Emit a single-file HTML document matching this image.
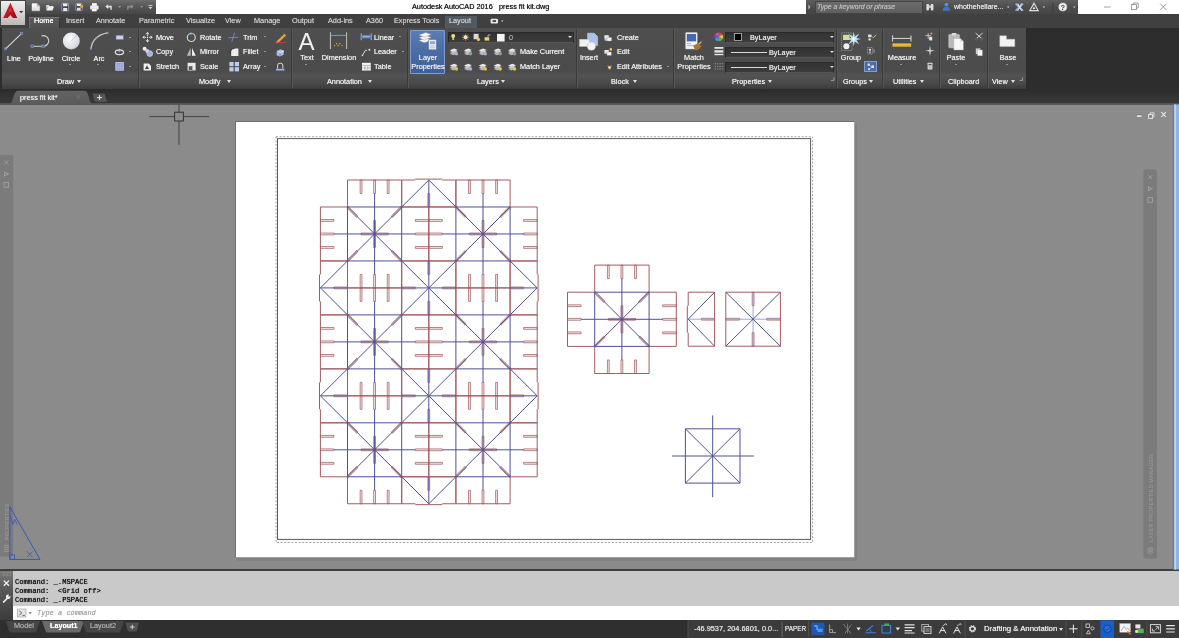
<!DOCTYPE html>
<html><head><meta charset="utf-8"><title>Autodesk AutoCAD 2016 press fit kit.dwg</title>
<style>
*{box-sizing:border-box;margin:0;padding:0}
html,body{width:1179px;height:638px;overflow:hidden;background:#8b8b8b;font-family:"Liberation Sans",sans-serif;font-size:7.3px;color:#ececec}
.a{position:absolute}
.t{position:absolute;white-space:nowrap;line-height:10px;height:10px;text-shadow:0 0 0.7px currentColor;will-change:transform}
svg{position:absolute;left:0;top:0;overflow:visible}
#title{left:0;top:0;width:1179px;height:14px;background:#fff}
#appbtn{z-index:10;left:0;top:0;width:25.5px;height:25.5px;background:linear-gradient(#eeeeee,#d4d4d4 55%,#b8b8b8);border:1px solid #444;border-width:0.8px 1.2px 1.4px 0.8px}
#qat{left:25px;top:0;width:131px;height:14.5px;background:linear-gradient(#6c6c6c,#565656 45%,#454545)}
#info{left:806px;top:0;width:272px;height:14.5px;background:linear-gradient(#5e5e5e,#4c4c4c 50%,#444)}
#tabs{left:0;top:14px;width:1179px;height:14px;background:#404040}
#ribbon{left:0;top:27.5px;width:1179px;height:62px;background:#2d2d2d}
#rpanels{left:1.5px;top:0;width:1024px;height:61px;background:linear-gradient(#4f4f4f,#4b4b4b 70%,#535353 78%,#4a4a4a 90%,#3c3c3c)}
.sep{position:absolute;top:1px;width:1px;height:59px;background:#3a3a3a;border-right:1px solid #575757;box-sizing:content-box}
#ftabs{left:0;top:88.5px;width:1179px;height:16.2px;background:linear-gradient(#2b2b2b,#353535 60%,#3a3a3a)}
#canvas{left:0;top:104.7px;width:1179px;height:465.3px;background:#8b8b8b}
#cmd{left:0;top:569px;width:1179px;height:51px}
#status{left:0;top:619.5px;width:1179px;height:18.5px;background:#2f2f2f}
.mono{font-family:"Liberation Mono",monospace}
</style></head><body>
<div class="a" id="title"><div class="a" id="qat"></div><div class="t" style="left:412px;top:2px;color:#1e1e1e;font-size:7.3px;">Autodesk AutoCAD 2016</div><div class="t" style="left:499px;top:2px;color:#1e1e1e;font-size:7.3px;">press fit kit.dwg</div><div class="a" id="info"></div><div class="a" style="left:814.5px;top:0.5px;width:108.5px;height:13px;background:linear-gradient(#6c6c6c,#5e5e5e);border:0.6px solid #444"></div><div class="t" style="left:817px;top:2.2px;color:#b9b9b9;font-size:6.8px;font-style:italic;">Type a keyword or phrase</div><div class="t" style="left:954px;top:2.2px;color:#e4e4e4;font-size:7px;">whothehellare...</div></div><div class="a" id="appbtn"></div>
<div class="a" id="tabs"><div class="a" style="left:28.5px;top:2.5px;width:31px;height:12px;background:linear-gradient(#5a5a5a,#505050);border-top:1px solid #777;border-left:1px solid #6a6a6a;border-right:1px solid #333"></div><div class="a" style="left:444.5px;top:1.5px;width:32px;height:12.5px;background:#525860;"></div><div class="t" style="left:34.2px;top:2.3px;color:#fff;">Home</div><div class="t" style="left:66.2px;top:2.3px;color:#c6c6c6;">Insert</div><div class="t" style="left:96.4px;top:2.3px;color:#c6c6c6;">Annotate</div><div class="t" style="left:138.5px;top:2.3px;color:#c6c6c6;">Parametric</div><div class="t" style="left:185.7px;top:2.3px;color:#c6c6c6;">Visualize</div><div class="t" style="left:225.4px;top:2.3px;color:#c6c6c6;">View</div><div class="t" style="left:253.5px;top:2.3px;color:#c6c6c6;">Manage</div><div class="t" style="left:291.5px;top:2.3px;color:#c6c6c6;">Output</div><div class="t" style="left:327.5px;top:2.3px;color:#c6c6c6;">Add-ins</div><div class="t" style="left:365.5px;top:2.3px;color:#c6c6c6;">A360</div><div class="t" style="left:393.5px;top:2.3px;color:#c6c6c6;">Express Tools</div><div class="t" style="left:449px;top:2.3px;color:#c6c6c6;">Layout</div></div>
<div class="a" id="ribbon"><div class="a" id="rpanels"></div><div class="sep" style="left:137.5px"></div><div class="sep" style="left:291px"></div><div class="sep" style="left:406.5px"></div><div class="sep" style="left:575.5px"></div><div class="sep" style="left:673px"></div><div class="sep" style="left:835.5px"></div><div class="sep" style="left:881.5px"></div><div class="sep" style="left:939px"></div><div class="sep" style="left:987px"></div><div class="t" style="left:14.2px;top:26.1px;transform:translateX(-50%);">Line</div><div class="t" style="left:40.6px;top:26.1px;transform:translateX(-50%);">Polyline</div><div class="t" style="left:71.2px;top:26.1px;transform:translateX(-50%);">Circle</div><div class="t" style="left:99.2px;top:26.1px;transform:translateX(-50%);">Arc</div><div class="a" style="left:69.4px;top:36.56px;width:0;height:0;border-left:1.4px solid transparent;border-right:1.4px solid transparent;border-top:1.96px solid #e0e0e0"></div><div class="a" style="left:97.3px;top:36.56px;width:0;height:0;border-left:1.4px solid transparent;border-right:1.4px solid transparent;border-top:1.96px solid #e0e0e0"></div><div class="a" style="left:128.6px;top:9.06px;width:0;height:0;border-left:1.4px solid transparent;border-right:1.4px solid transparent;border-top:1.96px solid #e0e0e0"></div><div class="a" style="left:128.6px;top:23.66px;width:0;height:0;border-left:1.4px solid transparent;border-right:1.4px solid transparent;border-top:1.96px solid #e0e0e0"></div><div class="a" style="left:128.6px;top:38.06px;width:0;height:0;border-left:1.4px solid transparent;border-right:1.4px solid transparent;border-top:1.96px solid #e0e0e0"></div><div class="t" style="left:57.2px;top:49.3px;">Draw</div><div class="a" style="left:77.3px;top:52.62px;width:0;height:0;border-left:2.3px solid transparent;border-right:2.3px solid transparent;border-top:3.22px solid #e0e0e0"></div><div class="t" style="left:155.8px;top:5.3px;">Move</div><div class="t" style="left:155.8px;top:19.9px;">Copy</div><div class="t" style="left:155.8px;top:34.6px;">Stretch</div><div class="t" style="left:200px;top:5.3px;">Rotate</div><div class="t" style="left:200px;top:19.9px;">Mirror</div><div class="t" style="left:200px;top:34.6px;">Scale</div><div class="t" style="left:242.5px;top:5.3px;">Trim</div><div class="t" style="left:242.5px;top:19.9px;">Fillet</div><div class="t" style="left:242.5px;top:34.6px;">Array</div><div class="a" style="left:264.1px;top:8.96px;width:0;height:0;border-left:1.4px solid transparent;border-right:1.4px solid transparent;border-top:1.96px solid #e0e0e0"></div><div class="a" style="left:264.1px;top:23.56px;width:0;height:0;border-left:1.4px solid transparent;border-right:1.4px solid transparent;border-top:1.96px solid #e0e0e0"></div><div class="a" style="left:264.1px;top:38.26px;width:0;height:0;border-left:1.4px solid transparent;border-right:1.4px solid transparent;border-top:1.96px solid #e0e0e0"></div><div class="t" style="left:199.2px;top:49.3px;">Modify</div><div class="a" style="left:226.6px;top:52.62px;width:0;height:0;border-left:2.3px solid transparent;border-right:2.3px solid transparent;border-top:3.22px solid #e0e0e0"></div><div class="t" style="left:306.5px;top:25.7px;transform:translateX(-50%);">Text</div><div class="a" style="left:305.0px;top:36.16px;width:0;height:0;border-left:1.4px solid transparent;border-right:1.4px solid transparent;border-top:1.96px solid #e0e0e0"></div><div class="t" style="left:339px;top:25.7px;transform:translateX(-50%);">Dimension</div><div class="t" style="left:374.2px;top:5.2px;">Linear</div><div class="t" style="left:374.2px;top:19.9px;">Leader</div><div class="t" style="left:374.2px;top:34.8px;">Table</div><div class="a" style="left:399.1px;top:8.46px;width:0;height:0;border-left:1.4px solid transparent;border-right:1.4px solid transparent;border-top:1.96px solid #e0e0e0"></div><div class="a" style="left:401.6px;top:23.56px;width:0;height:0;border-left:1.4px solid transparent;border-right:1.4px solid transparent;border-top:1.96px solid #e0e0e0"></div><div class="t" style="left:327.4px;top:49.3px;">Annotation</div><div class="a" style="left:367.5px;top:52.62px;width:0;height:0;border-left:2.3px solid transparent;border-right:2.3px solid transparent;border-top:3.22px solid #e0e0e0"></div><div class="a" style="left:409.7px;top:2.7px;width:35.7px;height:43.4px;background:linear-gradient(#5a7db5,#4a6ca4 50%,#3f5f96);border:1px solid #7f9fd0;border-radius:1px"></div><div class="t" style="left:427.6px;top:25.7px;transform:translateX(-50%);">Layer</div><div class="t" style="left:427.6px;top:34.8px;transform:translateX(-50%);">Properties</div><div class="a" style="left:447.6px;top:4.3px;width:126px;height:11px;background:linear-gradient(#323232,#3c3c3c);border:1px solid #2a2a2a;border-bottom-color:#555"></div><div class="t" style="left:508.6px;top:5.2px;color:#a8a8a8;">0</div><div class="a" style="left:567.7px;top:8.74px;width:0;height:0;border-left:2.1px solid transparent;border-right:2.1px solid transparent;border-top:2.94px solid #e0e0e0"></div><div class="t" style="left:520.4px;top:19.9px;">Make Current</div><div class="t" style="left:520.4px;top:34.8px;">Match Layer</div><div class="t" style="left:477.4px;top:49.3px;">Layers</div><div class="a" style="left:501.2px;top:52.62px;width:0;height:0;border-left:2.3px solid transparent;border-right:2.3px solid transparent;border-top:3.22px solid #e0e0e0"></div><div class="t" style="left:588.8px;top:25.7px;transform:translateX(-50%);">Insert</div><div class="t" style="left:616.5px;top:5.2px;">Create</div><div class="t" style="left:616.5px;top:19.9px;">Edit</div><div class="t" style="left:616.5px;top:34.8px;">Edit Attributes</div><div class="a" style="left:666.6px;top:38.46px;width:0;height:0;border-left:1.4px solid transparent;border-right:1.4px solid transparent;border-top:1.96px solid #e0e0e0"></div><div class="t" style="left:611px;top:49.3px;">Block</div><div class="a" style="left:632.8px;top:52.62px;width:0;height:0;border-left:2.3px solid transparent;border-right:2.3px solid transparent;border-top:3.22px solid #e0e0e0"></div><div class="t" style="left:693.5px;top:25.7px;transform:translateX(-50%);">Match</div><div class="t" style="left:693.9px;top:34.8px;transform:translateX(-50%);">Properties</div><div class="a" style="left:725.4px;top:4.3px;width:108.8px;height:10.8px;background:linear-gradient(#323232,#3c3c3c);border:1px solid #2a2a2a;border-bottom-color:#555"></div><div class="a" style="left:829.5px;top:8.64px;width:0;height:0;border-left:2.1px solid transparent;border-right:2.1px solid transparent;border-top:2.94px solid #e0e0e0"></div><div class="a" style="left:725.4px;top:19.5px;width:108.8px;height:10.8px;background:linear-gradient(#323232,#3c3c3c);border:1px solid #2a2a2a;border-bottom-color:#555"></div><div class="a" style="left:829.5px;top:23.84px;width:0;height:0;border-left:2.1px solid transparent;border-right:2.1px solid transparent;border-top:2.94px solid #e0e0e0"></div><div class="a" style="left:725.4px;top:34.3px;width:108.8px;height:10.8px;background:linear-gradient(#323232,#3c3c3c);border:1px solid #2a2a2a;border-bottom-color:#555"></div><div class="a" style="left:829.5px;top:38.64px;width:0;height:0;border-left:2.1px solid transparent;border-right:2.1px solid transparent;border-top:2.94px solid #e0e0e0"></div><div class="a" style="left:733.8px;top:5.4px;width:8.6px;height:8.6px;background:#000;border:0.6px solid #9a9a9a"></div><div class="t" style="left:749.5px;top:5.2px;color:#e4e4e4;">ByLayer</div><div class="a" style="left:731px;top:24.4px;width:35.5px;height:0.8px;background:#d8d8d8;"></div><div class="t" style="left:769px;top:20.3px;color:#e4e4e4;">ByLayer</div><div class="a" style="left:731px;top:39.3px;width:35.5px;height:0.8px;background:#d8d8d8;"></div><div class="t" style="left:769px;top:35.1px;color:#e4e4e4;">ByLayer</div><div class="t" style="left:731.8px;top:49.3px;">Properties</div><div class="a" style="left:767.5px;top:52.62px;width:0;height:0;border-left:2.3px solid transparent;border-right:2.3px solid transparent;border-top:3.22px solid #e0e0e0"></div><div class="t" style="left:850.7px;top:25.7px;transform:translateX(-50%);">Group</div><div class="a" style="left:863.9px;top:33.6px;width:13.6px;height:11.3px;background:#4a6ca4;border:1px solid #7f9fd0"></div><div class="t" style="left:842.6px;top:49.3px;">Groups</div><div class="a" style="left:869.1px;top:52.62px;width:0;height:0;border-left:2.3px solid transparent;border-right:2.3px solid transparent;border-top:3.22px solid #e0e0e0"></div><div class="t" style="left:901.8px;top:25.7px;transform:translateX(-50%);">Measure</div><div class="a" style="left:899.8px;top:36.16px;width:0;height:0;border-left:1.4px solid transparent;border-right:1.4px solid transparent;border-top:1.96px solid #e0e0e0"></div><div class="t" style="left:892.7px;top:49.3px;">Utilities</div><div class="a" style="left:919.7px;top:52.62px;width:0;height:0;border-left:2.3px solid transparent;border-right:2.3px solid transparent;border-top:3.22px solid #e0e0e0"></div><div class="t" style="left:956.3px;top:25.7px;transform:translateX(-50%);">Paste</div><div class="a" style="left:954.6px;top:36.16px;width:0;height:0;border-left:1.4px solid transparent;border-right:1.4px solid transparent;border-top:1.96px solid #e0e0e0"></div><div class="t" style="left:947.5px;top:49.3px;">Clipboard</div><div class="t" style="left:1007.5px;top:25.7px;transform:translateX(-50%);">Base</div><div class="a" style="left:1006.0px;top:36.16px;width:0;height:0;border-left:1.4px solid transparent;border-right:1.4px solid transparent;border-top:1.96px solid #e0e0e0"></div><div class="t" style="left:991.5px;top:49.3px;">View</div><div class="a" style="left:1010.5px;top:52.62px;width:0;height:0;border-left:2.3px solid transparent;border-right:2.3px solid transparent;border-top:3.22px solid #e0e0e0"></div></div>
<div class="a" id="ftabs"><svg width="1179" height="17" viewBox="0 0 1179 17"><defs><linearGradient id="ftg" x1="0" y1="0" x2="0" y2="1"><stop offset="0" stop-color="#636363"/><stop offset="1" stop-color="#5a5a5a"/></linearGradient></defs><rect x="0" y="14.2" width="1179" height="2" fill="#5a5a5a"/><path d="M9 15.5 C13.5 15.5 13 1.7 18 1.7 L84.5 1.7 C89.5 1.7 88.5 15.5 93.5 15.5 Z" fill="url(#ftg)"/><path d="M92.6 4.4 L103.4 4.4 Q104.6 4.4 105 5.6 L106.8 12.8 L96 12.8 Q94.8 12.8 94.4 11.6 Z" fill="#555"/><path d="M97 8.6 h5 M99.5 6.1 v5" stroke="#e4e4e4" stroke-width="1"/><path d="M76.8 6.2 l3.2 3.2 m0 -3.2 l-3.2 3.2" stroke="#7a7a7a" stroke-width="0.8"/></svg><div class="t" style="left:19.8px;top:4px;color:#ececec;">press fit kit*</div></div>
<div class="a" id="canvas"></div>
<div class="a" style="left:237px;top:123.5px;width:619.5px;height:437.5px;background:#818181"></div>
<div class="a" style="left:235px;top:121px;width:619.5px;height:437px;background:#fff;border:1px solid #707070;border-right-color:#a0a0a0;border-bottom-color:#a0a0a0"></div>
<svg class="dw" width="1179" height="638" viewBox="0 0 1179 638"><path d="M360.15 180L360.15 193.49L361.95 193.49L361.95 180ZM361.95 287.92L361.95 274.43L360.15 274.43L360.15 287.92ZM320.4 221.37L333.95 221.37L333.95 219.57L320.4 219.57ZM428.8 219.57L415.25 219.57L415.25 221.37L428.8 221.37ZM373.7 180L373.7 193.49L375.5 193.49L375.5 180ZM375.5 287.92L375.5 274.43L373.7 274.43L373.7 287.92ZM320.4 234.86L333.95 234.86L333.95 233.06L320.4 233.06ZM428.8 233.06L415.25 233.06L415.25 234.86L428.8 234.86ZM387.25 180L387.25 193.49L389.05 193.49L389.05 180ZM389.05 287.92L389.05 274.43L387.25 274.43L387.25 287.92ZM320.4 248.35L333.95 248.35L333.95 246.55L320.4 246.55ZM428.8 246.55L415.25 246.55L415.25 248.35L428.8 248.35ZM361.05 234.86L388.15 234.86L388.15 233.06L361.05 233.06ZM373.7 220.47L373.7 247.45L375.5 247.45L375.5 220.47ZM346.87 207.62L356.62 217.33L357.89 216.05L348.13 206.34ZM401.07 206.34L391.31 216.05L392.58 217.33L402.33 207.62ZM348.13 261.58L357.89 251.87L356.62 250.59L346.87 260.3ZM402.33 260.3L392.58 250.59L391.31 251.87L401.07 261.58ZM468.55 180L468.55 193.49L470.35 193.49L470.35 180ZM470.35 287.92L470.35 274.43L468.55 274.43L468.55 287.92ZM428.8 221.37L442.35 221.37L442.35 219.57L428.8 219.57ZM537.2 219.57L523.65 219.57L523.65 221.37L537.2 221.37ZM482.1 180L482.1 193.49L483.9 193.49L483.9 180ZM483.9 287.92L483.9 274.43L482.1 274.43L482.1 287.92ZM428.8 234.86L442.35 234.86L442.35 233.06L428.8 233.06ZM537.2 233.06L523.65 233.06L523.65 234.86L537.2 234.86ZM495.65 180L495.65 193.49L497.45 193.49L497.45 180ZM497.45 287.92L497.45 274.43L495.65 274.43L495.65 287.92ZM428.8 248.35L442.35 248.35L442.35 246.55L428.8 246.55ZM537.2 246.55L523.65 246.55L523.65 248.35L537.2 248.35ZM469.45 234.86L496.55 234.86L496.55 233.06L469.45 233.06ZM482.1 220.47L482.1 247.45L483.9 247.45L483.9 220.47ZM455.27 207.62L465.02 217.33L466.29 216.05L456.53 206.34ZM509.47 206.34L499.71 216.05L500.98 217.33L510.73 207.62ZM456.53 261.58L466.29 251.87L465.02 250.59L455.27 260.3ZM510.73 260.3L500.98 250.59L499.71 251.87L509.47 261.58ZM360.15 287.92L360.15 301.41L361.95 301.41L361.95 287.92ZM361.95 395.84L361.95 382.35L360.15 382.35L360.15 395.84ZM320.4 329.29L333.95 329.29L333.95 327.49L320.4 327.49ZM428.8 327.49L415.25 327.49L415.25 329.29L428.8 329.29ZM373.7 287.92L373.7 301.41L375.5 301.41L375.5 287.92ZM375.5 395.84L375.5 382.35L373.7 382.35L373.7 395.84ZM320.4 342.78L333.95 342.78L333.95 340.98L320.4 340.98ZM428.8 340.98L415.25 340.98L415.25 342.78L428.8 342.78ZM387.25 287.92L387.25 301.41L389.05 301.41L389.05 287.92ZM389.05 395.84L389.05 382.35L387.25 382.35L387.25 395.84ZM320.4 356.27L333.95 356.27L333.95 354.47L320.4 354.47ZM428.8 354.47L415.25 354.47L415.25 356.27L428.8 356.27ZM361.05 342.78L388.15 342.78L388.15 340.98L361.05 340.98ZM373.7 328.39L373.7 355.37L375.5 355.37L375.5 328.39ZM346.87 315.54L356.62 325.25L357.89 323.97L348.13 314.26ZM401.07 314.26L391.31 323.97L392.58 325.25L402.33 315.54ZM348.13 369.5L357.89 359.79L356.62 358.51L346.87 368.22ZM402.33 368.22L392.58 358.51L391.31 359.79L401.07 369.5ZM468.55 287.92L468.55 301.41L470.35 301.41L470.35 287.92ZM470.35 395.84L470.35 382.35L468.55 382.35L468.55 395.84ZM428.8 329.29L442.35 329.29L442.35 327.49L428.8 327.49ZM537.2 327.49L523.65 327.49L523.65 329.29L537.2 329.29ZM482.1 287.92L482.1 301.41L483.9 301.41L483.9 287.92ZM483.9 395.84L483.9 382.35L482.1 382.35L482.1 395.84ZM428.8 342.78L442.35 342.78L442.35 340.98L428.8 340.98ZM537.2 340.98L523.65 340.98L523.65 342.78L537.2 342.78ZM495.65 287.92L495.65 301.41L497.45 301.41L497.45 287.92ZM497.45 395.84L497.45 382.35L495.65 382.35L495.65 395.84ZM428.8 356.27L442.35 356.27L442.35 354.47L428.8 354.47ZM537.2 354.47L523.65 354.47L523.65 356.27L537.2 356.27ZM469.45 342.78L496.55 342.78L496.55 340.98L469.45 340.98ZM482.1 328.39L482.1 355.37L483.9 355.37L483.9 328.39ZM455.27 315.54L465.02 325.25L466.29 323.97L456.53 314.26ZM509.47 314.26L499.71 323.97L500.98 325.25L510.73 315.54ZM456.53 369.5L466.29 359.79L465.02 358.51L455.27 368.22ZM510.73 368.22L500.98 358.51L499.71 359.79L509.47 369.5ZM360.15 395.84L360.15 409.33L361.95 409.33L361.95 395.84ZM361.95 503.76L361.95 490.27L360.15 490.27L360.15 503.76ZM320.4 437.21L333.95 437.21L333.95 435.41L320.4 435.41ZM428.8 435.41L415.25 435.41L415.25 437.21L428.8 437.21ZM373.7 395.84L373.7 409.33L375.5 409.33L375.5 395.84ZM375.5 503.76L375.5 490.27L373.7 490.27L373.7 503.76ZM320.4 450.7L333.95 450.7L333.95 448.9L320.4 448.9ZM428.8 448.9L415.25 448.9L415.25 450.7L428.8 450.7ZM387.25 395.84L387.25 409.33L389.05 409.33L389.05 395.84ZM389.05 503.76L389.05 490.27L387.25 490.27L387.25 503.76ZM320.4 464.19L333.95 464.19L333.95 462.39L320.4 462.39ZM428.8 462.39L415.25 462.39L415.25 464.19L428.8 464.19ZM361.05 450.7L388.15 450.7L388.15 448.9L361.05 448.9ZM373.7 436.31L373.7 463.29L375.5 463.29L375.5 436.31ZM346.87 423.46L356.62 433.17L357.89 431.89L348.13 422.18ZM401.07 422.18L391.31 431.89L392.58 433.17L402.33 423.46ZM348.13 477.42L357.89 467.71L356.62 466.43L346.87 476.14ZM402.33 476.14L392.58 466.43L391.31 467.71L401.07 477.42ZM468.55 395.84L468.55 409.33L470.35 409.33L470.35 395.84ZM470.35 503.76L470.35 490.27L468.55 490.27L468.55 503.76ZM428.8 437.21L442.35 437.21L442.35 435.41L428.8 435.41ZM537.2 435.41L523.65 435.41L523.65 437.21L537.2 437.21ZM482.1 395.84L482.1 409.33L483.9 409.33L483.9 395.84ZM483.9 503.76L483.9 490.27L482.1 490.27L482.1 503.76ZM428.8 450.7L442.35 450.7L442.35 448.9L428.8 448.9ZM537.2 448.9L523.65 448.9L523.65 450.7L537.2 450.7ZM495.65 395.84L495.65 409.33L497.45 409.33L497.45 395.84ZM497.45 503.76L497.45 490.27L495.65 490.27L495.65 503.76ZM428.8 464.19L442.35 464.19L442.35 462.39L428.8 462.39ZM537.2 462.39L523.65 462.39L523.65 464.19L537.2 464.19ZM469.45 450.7L496.55 450.7L496.55 448.9L469.45 448.9ZM482.1 436.31L482.1 463.29L483.9 463.29L483.9 436.31ZM455.27 423.46L465.02 433.17L466.29 431.89L456.53 422.18ZM509.47 422.18L499.71 431.89L500.98 433.17L510.73 423.46ZM456.53 477.42L466.29 467.71L465.02 466.43L455.27 476.14ZM510.73 476.14L500.98 466.43L499.71 467.71L509.47 477.42ZM427.9 260.94L427.9 274.43L429.7 274.43L429.7 260.94ZM429.7 314.9L429.7 301.41L427.9 301.41L427.9 314.9ZM401.7 288.82L415.25 288.82L415.25 287.02L401.7 287.02ZM455.9 287.02L442.35 287.02L442.35 288.82L455.9 288.82ZM347.5 287.02L333.95 287.02L333.95 288.82L347.5 288.82ZM510.1 288.82L523.65 288.82L523.65 287.02L510.1 287.02ZM427.9 368.86L427.9 382.35L429.7 382.35L429.7 368.86ZM429.7 422.82L429.7 409.33L427.9 409.33L427.9 422.82ZM401.7 396.74L415.25 396.74L415.25 394.94L401.7 394.94ZM455.9 394.94L442.35 394.94L442.35 396.74L455.9 396.74ZM347.5 394.94L333.95 394.94L333.95 396.74L347.5 396.74ZM510.1 396.74L523.65 396.74L523.65 394.94L510.1 394.94ZM429.7 206.98L429.7 193.49L427.9 193.49L427.9 206.98ZM427.9 476.78L427.9 490.27L429.7 490.27L429.7 476.78ZM607.4 265.1L607.4 278.65L609.2 278.65L609.2 265.1ZM609.2 373.5L609.2 359.95L607.4 359.95L607.4 373.5ZM567.5 306.65L581.1 306.65L581.1 304.85L567.5 304.85ZM676.3 304.85L662.7 304.85L662.7 306.65L676.3 306.65ZM621 265.1L621 278.65L622.8 278.65L622.8 265.1ZM622.8 373.5L622.8 359.95L621 359.95L621 373.5ZM567.5 320.2L581.1 320.2L581.1 318.4L567.5 318.4ZM676.3 318.4L662.7 318.4L662.7 320.2L676.3 320.2ZM634.6 265.1L634.6 278.65L636.4 278.65L636.4 265.1ZM636.4 373.5L636.4 359.95L634.6 359.95L634.6 373.5ZM567.5 333.75L581.1 333.75L581.1 331.95L567.5 331.95ZM676.3 331.95L662.7 331.95L662.7 333.75L676.3 333.75ZM608.3 320.2L635.5 320.2L635.5 318.4L608.3 318.4ZM621 305.75L621 332.85L622.8 332.85L622.8 305.75ZM594.06 292.84L603.86 302.59L605.13 301.32L595.34 291.56ZM648.46 291.56L638.67 301.32L639.94 302.59L649.74 292.84ZM595.34 347.04L605.13 337.28L603.86 336.01L594.06 345.76ZM649.74 345.76L639.94 336.01L638.67 337.28L648.46 347.04ZM714.6 318.3L701.4 318.3L701.4 320.1L714.6 320.1ZM752.2 292.2L752.2 305.7L754 305.7L754 292.2ZM754 346.2L754 332.7L752.2 332.7L752.2 346.2ZM725.8 320.1L739.45 320.1L739.45 318.3L725.8 318.3ZM780.4 318.3L766.75 318.3L766.75 320.1L780.4 320.1Z" fill="#fbeced" stroke="#a25c62" stroke-width="0.75"/>
<path d="M347.5 206.98L347.5 180M347.5 180L401.7 180M401.7 180L401.7 206.98M347.5 260.94L347.5 287.92M347.5 287.92L401.7 287.92M401.7 287.92L401.7 260.94M347.5 206.98L320.4 206.98M320.4 206.98L320.4 260.94M320.4 260.94L347.5 260.94M401.7 206.98L428.8 206.98M428.8 206.98L428.8 260.94M428.8 260.94L401.7 260.94M455.9 206.98L455.9 180M455.9 180L510.1 180M510.1 180L510.1 206.98M455.9 260.94L455.9 287.92M455.9 287.92L510.1 287.92M510.1 287.92L510.1 260.94M455.9 206.98L428.8 206.98M428.8 206.98L428.8 260.94M428.8 260.94L455.9 260.94M510.1 206.98L537.2 206.98M537.2 206.98L537.2 260.94M537.2 260.94L510.1 260.94M347.5 314.9L347.5 287.92M347.5 287.92L401.7 287.92M401.7 287.92L401.7 314.9M347.5 368.86L347.5 395.84M347.5 395.84L401.7 395.84M401.7 395.84L401.7 368.86M347.5 314.9L320.4 314.9M320.4 314.9L320.4 368.86M320.4 368.86L347.5 368.86M401.7 314.9L428.8 314.9M428.8 314.9L428.8 368.86M428.8 368.86L401.7 368.86M455.9 314.9L455.9 287.92M455.9 287.92L510.1 287.92M510.1 287.92L510.1 314.9M455.9 368.86L455.9 395.84M455.9 395.84L510.1 395.84M510.1 395.84L510.1 368.86M455.9 314.9L428.8 314.9M428.8 314.9L428.8 368.86M428.8 368.86L455.9 368.86M510.1 314.9L537.2 314.9M537.2 314.9L537.2 368.86M537.2 368.86L510.1 368.86M347.5 422.82L347.5 395.84M347.5 395.84L401.7 395.84M401.7 395.84L401.7 422.82M347.5 476.78L347.5 503.76M347.5 503.76L401.7 503.76M401.7 503.76L401.7 476.78M347.5 422.82L320.4 422.82M320.4 422.82L320.4 476.78M320.4 476.78L347.5 476.78M401.7 422.82L428.8 422.82M428.8 422.82L428.8 476.78M428.8 476.78L401.7 476.78M455.9 422.82L455.9 395.84M455.9 395.84L510.1 395.84M510.1 395.84L510.1 422.82M455.9 476.78L455.9 503.76M455.9 503.76L510.1 503.76M510.1 503.76L510.1 476.78M455.9 422.82L428.8 422.82M428.8 422.82L428.8 476.78M428.8 476.78L455.9 476.78M510.1 422.82L537.2 422.82M537.2 422.82L537.2 476.78M537.2 476.78L510.1 476.78M401.7 260.94L455.9 260.94M455.9 260.94L455.9 314.9M455.9 314.9L401.7 314.9M401.7 314.9L401.7 260.94M320.4 260.94L347.5 260.94M347.5 260.94L347.5 314.9M347.5 314.9L320.4 314.9M320.4 260.94L320.4 274.43M319.5 274.43L319.5 301.41M320.4 301.41L320.4 314.9M537.2 260.94L510.1 260.94M510.1 260.94L510.1 314.9M510.1 314.9L537.2 314.9M537.2 260.94L537.2 274.43M538.1 274.43L538.1 301.41M537.2 301.41L537.2 314.9M401.7 368.86L455.9 368.86M455.9 368.86L455.9 422.82M455.9 422.82L401.7 422.82M401.7 422.82L401.7 368.86M320.4 368.86L347.5 368.86M347.5 368.86L347.5 422.82M347.5 422.82L320.4 422.82M320.4 368.86L320.4 382.35M319.5 382.35L319.5 409.33M320.4 409.33L320.4 422.82M537.2 368.86L510.1 368.86M510.1 368.86L510.1 422.82M510.1 422.82L537.2 422.82M537.2 368.86L537.2 382.35M538.1 382.35L538.1 409.33M537.2 409.33L537.2 422.82M401.7 180L401.7 206.98M401.7 206.98L455.9 206.98M455.9 206.98L455.9 180M401.7 180L415.25 180M415.25 179.1L442.35 179.1M442.35 180L455.9 180M401.7 503.76L401.7 476.78M401.7 476.78L455.9 476.78M455.9 476.78L455.9 503.76M401.7 503.76L415.25 503.76M415.25 504.66L442.35 504.66M442.35 503.76L455.9 503.76M594.7 292.2L594.7 265.1M594.7 265.1L649.1 265.1M649.1 265.1L649.1 292.2M594.7 346.4L594.7 373.5M594.7 373.5L649.1 373.5M649.1 373.5L649.1 346.4M594.7 292.2L567.5 292.2M567.5 292.2L567.5 346.4M567.5 346.4L594.7 346.4M649.1 292.2L676.3 292.2M676.3 292.2L676.3 346.4M676.3 346.4L649.1 346.4M688.2 292.2L714.6 292.2M714.6 292.2L714.6 346.2M714.6 346.2L688.2 346.2M688.2 292.2L688.2 305.7M687.3 305.7L687.3 332.7M688.2 332.7L688.2 346.2M725.8 292.2L780.4 292.2M780.4 292.2L780.4 346.2M780.4 346.2L725.8 346.2M725.8 346.2L725.8 292.2" fill="none" stroke="#a25c62" stroke-width="1"/>
<path d="M688.2 319.2L714.6 319.2M725.8 319.2L780.4 319.2M753.1 292.2L753.1 346.2" fill="none" stroke="#8a8acc" stroke-width="0.8"/>
<path d="M347.5 206.98L401.7 206.98M401.7 206.98L401.7 260.94M401.7 260.94L347.5 260.94M347.5 260.94L347.5 206.98M333.95 233.96L415.25 233.96M374.6 193.49L374.6 274.43M347.5 206.98L401.7 260.94M401.7 206.98L347.5 260.94M455.9 206.98L510.1 206.98M510.1 206.98L510.1 260.94M510.1 260.94L455.9 260.94M455.9 260.94L455.9 206.98M442.35 233.96L523.65 233.96M483 193.49L483 274.43M455.9 206.98L510.1 260.94M510.1 206.98L455.9 260.94M347.5 314.9L401.7 314.9M401.7 314.9L401.7 368.86M401.7 368.86L347.5 368.86M347.5 368.86L347.5 314.9M333.95 341.88L415.25 341.88M374.6 301.41L374.6 382.35M347.5 314.9L401.7 368.86M401.7 314.9L347.5 368.86M455.9 314.9L510.1 314.9M510.1 314.9L510.1 368.86M510.1 368.86L455.9 368.86M455.9 368.86L455.9 314.9M442.35 341.88L523.65 341.88M483 301.41L483 382.35M455.9 314.9L510.1 368.86M510.1 314.9L455.9 368.86M347.5 422.82L401.7 422.82M401.7 422.82L401.7 476.78M401.7 476.78L347.5 476.78M347.5 476.78L347.5 422.82M333.95 449.8L415.25 449.8M374.6 409.33L374.6 490.27M347.5 422.82L401.7 476.78M401.7 422.82L347.5 476.78M455.9 422.82L510.1 422.82M510.1 422.82L510.1 476.78M510.1 476.78L455.9 476.78M455.9 476.78L455.9 422.82M442.35 449.8L523.65 449.8M483 409.33L483 490.27M455.9 422.82L510.1 476.78M510.1 422.82L455.9 476.78M401.7 287.92L455.9 287.92M428.8 260.94L428.8 314.9M401.7 260.94L455.9 314.9M455.9 260.94L401.7 314.9M320.4 287.92L347.5 287.92M320.4 287.92L347.5 260.94M320.4 287.92L347.5 314.9M537.2 287.92L510.1 287.92M537.2 287.92L510.1 260.94M537.2 287.92L510.1 314.9M401.7 395.84L455.9 395.84M428.8 368.86L428.8 422.82M401.7 368.86L455.9 422.82M455.9 368.86L401.7 422.82M320.4 395.84L347.5 395.84M320.4 395.84L347.5 368.86M320.4 395.84L347.5 422.82M537.2 395.84L510.1 395.84M537.2 395.84L510.1 368.86M537.2 395.84L510.1 422.82M428.8 180L428.8 206.98M428.8 180L401.7 206.98M428.8 180L455.9 206.98M428.8 503.76L428.8 476.78M428.8 503.76L401.7 476.78M428.8 503.76L455.9 476.78M594.7 292.2L649.1 292.2M649.1 292.2L649.1 346.4M649.1 346.4L594.7 346.4M594.7 346.4L594.7 292.2M581.1 319.3L662.7 319.3M621.9 278.65L621.9 359.95M594.7 292.2L649.1 346.4M649.1 292.2L594.7 346.4M688.2 319.2L714.6 292.2M688.2 319.2L714.6 346.2M725.8 292.2L780.4 346.2M780.4 292.2L725.8 346.2M685.4 428.8L740 428.8M740 428.8L740 483.1M740 483.1L685.4 483.1M685.4 483.1L685.4 428.8M685.4 428.8L740 483.1M740 428.8L685.4 483.1M672.1 456L753.9 456M712.7 415.4L712.7 497.2" fill="none" stroke="#505096" stroke-width="1"/><rect x="276" y="136.7" width="536.6" height="405.8" fill="none" stroke="#8c8c8c" stroke-width="0.8" stroke-dasharray="2 1.6"/>
<rect x="277.5" y="138.6" width="533.1" height="400.8" fill="none" stroke="#5a5a5a" stroke-width="1"/>
<path d="M149.4 116.6 H174.6 M183.4 116.6 H209 M179 104.6 V112.2 M179 121 V144.8" stroke="#3a3a3a" stroke-width="0.9" fill="none"/>
<rect x="174.6" y="112.2" width="8.8" height="8.8" fill="none" stroke="#333" stroke-width="1"/></svg><div class="a" id="cmd"><div class="a" style="left:0px;top:0px;width:1179px;height:1.5px;background:#3e3e3e;"></div><div class="a" style="left:0px;top:1.5px;width:1179px;height:35px;background:#c9c9c9;"></div><div class="a" style="left:0px;top:36.5px;width:1179px;height:14px;background:#fff;"></div><div class="a" style="left:0px;top:1.5px;width:13.3px;height:49px;background:linear-gradient(#7a7a7a,#5a5a5a 35%,#3c3c3c);"></div><div class="t" style="left:15px;top:7.6px;color:#111;font-size:7.15px;font-family:&quot;Liberation Mono&quot;,monospace;">Command: _.MSPACE</div><div class="t" style="left:15px;top:16.5px;color:#111;font-size:7.15px;font-family:&quot;Liberation Mono&quot;,monospace;">Command:&nbsp;&nbsp;&lt;Grid off&gt;</div><div class="t" style="left:15px;top:25.9px;color:#111;font-size:7.15px;font-family:&quot;Liberation Mono&quot;,monospace;">Command: _.PSPACE</div><div class="t" style="left:36.6px;top:39px;color:#aaa;font-size:7px;font-style:italic;font-family:&quot;Liberation Mono&quot;,monospace;">Type a command</div></div>
<div class="a" id="status"><svg width="1179" height="19" viewBox="0 0 1179 19"><path d="M6 1 L40 1 L36.5 11 Q36 12.5 34 12.5 L11 12.5 Q9.5 12.5 9 11 Z" fill="#454545"/><path d="M42 1 L84 1 L80.5 11 Q80 12.5 78 12.5 L47.5 12.5 Q46 12.5 45.5 11 Z" fill="#6a6a6a"/><path d="M82 1 L124 1 L120.5 11 Q120 12.5 118 12.5 L87.5 12.5 Q86 12.5 85.5 11 Z" fill="#454545"/><path d="M125.5 2.5 L139 2.5 L137 10.5 Q136.6 11.5 135 11.5 L129.5 11.5 Q128 11.5 127.6 10.5 Z" fill="#505050"/><path d="M130 7 h4.6 M132.3 4.7 v4.6" stroke="#e0e0e0" stroke-width="0.9"/></svg><div class="t" style="left:14.3px;top:1.7px;color:#a8a8a8;">Model</div><div class="t" style="left:49.5px;top:1.7px;color:#fff;font-size:7.2px;font-weight:bold;">Layout1</div><div class="t" style="left:90px;top:1.7px;color:#a8a8a8;">Layout2</div><div class="a" style="left:688px;top:0px;width:491px;height:18.5px;background:#3b3b3b;"></div><div class="t" style="left:693.7px;top:4.4px;color:#e0e0e0;font-size:7.36px;">-46.9537, 204.6801, 0.0...</div><div class="a" style="left:782px;top:2px;width:1px;height:15px;background:#555;"></div><div class="t" style="left:784.8px;top:4.4px;color:#e0e0e0;font-size:6.4px;">PAPER</div><div class="t" style="left:983.6px;top:4.2px;color:#ececec;font-size:7.75px;">Drafting &amp; Annotation</div><div class="a" style="left:1059.0px;top:8.28px;width:0;height:0;border-left:2.2px solid transparent;border-right:2.2px solid transparent;border-top:3.08px solid #e0e0e0"></div></div>
<svg width="1179" height="638" viewBox="0 0 1179 638" style="z-index:20"><defs><radialGradient id="gcirc" cx="0.4" cy="0.35" r="0.75"><stop offset="0" stop-color="#fbfbfd"/><stop offset="0.7" stop-color="#dcdde4"/><stop offset="1" stop-color="#b9bcc8"/></radialGradient><linearGradient id="gA" x1="0" y1="0" x2="1" y2="1"><stop offset="0" stop-color="#e8272d"/><stop offset="1" stop-color="#8f0d12"/></linearGradient><linearGradient id="gpage" x1="0" y1="0" x2="0" y2="1"><stop offset="0" stop-color="#ffffff"/><stop offset="1" stop-color="#d8d8d8"/></linearGradient></defs>
<path d="M10.4 2.8 L17.2 17.9 L13 17.9 L10.4 15 L7.6 17.9 L3.2 17.9 Z" fill="url(#gA)" stroke="none" stroke-width="1" />
<path d="M10.4 7.6 L12.4 12.6 L10.4 11.6 L8.4 12.6 Z" fill="#d23a40" stroke="none" stroke-width="1" />
<path d="M19.2 10.9 h4 l-2 2.4 Z" fill="#333" stroke="none" stroke-width="1" />
<path d="M32 3.6 h5 l2.6 2.6 v4.6 h-7.6 Z" fill="url(#gpage)" stroke="#f4f4f4" stroke-width="0.4" />
<path d="M37 3.6 v2.6 h2.6" fill="#bbb" stroke="#999" stroke-width="0.4" />
<path d="M46.2 10.4 v-5.4 h2.6 l0.8 1 h3.6 v1 h-5.6 l-1.4 3.4 Z" fill="#d9d9d9" stroke="none" stroke-width="1" />
<path d="M46.4 10.6 l1.6 -3.8 h6 l-1.6 3.8 Z" fill="#f0f0f0" stroke="none" stroke-width="1" />
<rect x="61.8" y="3.4" width="6.8" height="7.6" fill="#3a4560" stroke="#cfd4e0" stroke-width="0.5" rx="0.6" />
<rect x="63" y="3.6" width="4.4" height="2.6" fill="#f2f2f2" stroke="none" stroke-width="1" rx="0" />
<rect x="63.2" y="8" width="4" height="3" fill="#e8e8e8" stroke="none" stroke-width="1" rx="0" />
<rect x="75.8" y="3.6" width="6.4" height="7" fill="#3a4560" stroke="#cfd4e0" stroke-width="0.5" rx="0.6" />
<rect x="76.8" y="3.8" width="4.2" height="2.2" fill="#f2f2f2" stroke="none" stroke-width="1" rx="0" />
<rect x="77" y="7.8" width="3.6" height="2.6" fill="#e0e0e0" stroke="none" stroke-width="1" rx="0" />
<circle cx="81.6" cy="6.4" r="1.7" fill="#e29a3a" stroke="none" stroke-width="1" />
<rect x="90.2" y="5.6" width="8.4" height="4" fill="#ececec" stroke="none" stroke-width="1" rx="0.8" />
<rect x="92" y="3.2" width="4.8" height="2.6" fill="#fafafa" stroke="none" stroke-width="1" rx="0" />
<rect x="92" y="8.4" width="4.8" height="2.8" fill="#fafafa" stroke="#bbb" stroke-width="0.3" rx="0" />
<path d="M105.2 6.6 l3 -2.4 v1.6 h3.6 v4 h-1.4 v-2.4 h-2.2 v1.6 Z" fill="#dedede" stroke="none" stroke-width="1" />
<path d="M118.4 6.2 h2.6 l-1.3 1.6 Z" fill="#bdbdbd" stroke="none" stroke-width="1" />
<path d="M133.8 6.6 l-3 -2.4 v1.6 h-3.6 v4 h1.4 v-2.4 h2.2 v1.6 Z" fill="#8a8a8a" stroke="none" stroke-width="1" />
<path d="M140.4 6.2 h2.6 l-1.3 1.6 Z" fill="#a8a8a8" stroke="none" stroke-width="1" />
<rect x="148.4" y="5" width="4" height="0.9" fill="#d8d8d8" stroke="none" stroke-width="1" rx="0" />
<path d="M148.4 7 h4 l-2 2.2 Z" fill="#d8d8d8" stroke="none" stroke-width="1" />
<path d="M808.4 4.6 l2 2.4 l-2 2.4 Z" fill="#bdbdbd" stroke="none" stroke-width="1" />
<rect x="926.4" y="4" width="2.6" height="6.4" fill="#e0e0e0" stroke="none" stroke-width="1" rx="0.8" />
<rect x="930.8" y="4" width="2.6" height="6.4" fill="#e0e0e0" stroke="none" stroke-width="1" rx="0.8" />
<rect x="928.6" y="5.6" width="2.6" height="2.2" fill="#cfcfcf" stroke="none" stroke-width="1" rx="0" />
<circle cx="946.4" cy="4.6" r="1.9" fill="#5b8be0" stroke="none" stroke-width="1" />
<path d="M942.8 10.8 q0 -4 3.6 -4 q3.6 0 3.6 4 Z" fill="#3f73d3" stroke="none" stroke-width="1" />
<path d="M1006.8 6.4 h2.8 l-1.4 1.7 Z" fill="#d0d0d0" stroke="none" stroke-width="1" />
<path d="M1015.6 3.6 l3.2 3.6 l-3.2 3.6 M1023 3.6 l-3.2 3.6 l3.2 3.6" fill="none" stroke="#8fb0ea" stroke-width="1.6" />
<path d="M1017.6 3.6 l4 7.2 M1021.6 3.6 l-4 7.2" fill="none" stroke="#e8e8e8" stroke-width="1.1" />
<path d="M1034 3.2 l4.2 7.4 h-8.4 Z" fill="none" stroke="#e4e4e4" stroke-width="1.1" />
<path d="M1034 6.4 l1.5 2.7 h-3 Z" fill="#e4e4e4" stroke="none" stroke-width="1" />
<path d="M1042.6 6.4 h2.6 l-1.3 1.6 Z" fill="#d0d0d0" stroke="none" stroke-width="1" />
<rect x="1052.5" y="2" width="0.8" height="10.5" fill="#3a3a3a" stroke="none" stroke-width="1" rx="0" />
<circle cx="1062.8" cy="7" r="4.1" fill="#f2f2f2" stroke="#bbb" stroke-width="0.5" />
<text x="1062.8" y="9.6" font-family="Liberation Sans,sans-serif" font-weight="bold" font-size="7.4" text-anchor="middle" fill="#3a3a3a">?</text>
<path d="M1073 6.4 h2.6 l-1.3 1.6 Z" fill="#d0d0d0" stroke="none" stroke-width="1" />
<line x1="1104" y1="7" x2="1110.6" y2="7" stroke="#8a8a8a" stroke-width="0.8" />
<rect x="1131.6" y="4.6" width="5" height="5" fill="none" stroke="#8a8a8a" stroke-width="0.8" rx="0" />
<path d="M1133.2 4.6 v-1.6 h5 v5 h-1.6" fill="none" stroke="#8a8a8a" stroke-width="0.8" />
<path d="M1160 3.6 l6.6 6.6 M1166.6 3.6 l-6.6 6.6" fill="none" stroke="#8a8a8a" stroke-width="0.8" />
<rect x="490.6" y="18.8" width="7.4" height="4.6" fill="#e4e4e4" stroke="none" stroke-width="1" rx="1" />
<rect x="492.6" y="20.2" width="3.4" height="1.8" fill="#404040" stroke="none" stroke-width="1" rx="0" />
<path d="M501 20.4 h2.6 l-1.3 1.6 Z" fill="#cfcfcf" stroke="none" stroke-width="1" />
<line x1="5.6" y1="48.8" x2="21.4" y2="33.6" stroke="#d9d9d9" stroke-width="1.1" />
<rect x="4.4" y="47.8" width="2.2" height="2.2" fill="none" stroke="#8796c8" stroke-width="0.6" rx="0" />
<rect x="20.6" y="32.4" width="2.2" height="2.2" fill="none" stroke="#8796c8" stroke-width="0.6" rx="0" />
<path d="M32.2 46.2 H43.6 A5.3 5.3 0 1 0 41.4 36" fill="none" stroke="#d4d4d4" stroke-width="1.1" />
<rect x="31" y="45" width="2.4" height="2.4" fill="#5a668c" stroke="#7f93d6" stroke-width="0.7" rx="0" />
<rect x="41.8" y="45" width="2.4" height="2.4" fill="#5a668c" stroke="#7f93d6" stroke-width="0.7" rx="0" />
<circle cx="71.3" cy="41.1" r="8.5" fill="url(#gcirc)" stroke="none" stroke-width="1" />
<line x1="71.3" y1="41.1" x2="77" y2="35.2" stroke="#a9b8e2" stroke-width="0.7" />
<path d="M91 48.8 Q92.5 35.6 107.4 32.8" fill="none" stroke="#c8c8c8" stroke-width="1.3" />
<circle cx="91" cy="48.8" r="1.1" fill="#7f8fc4" stroke="none" stroke-width="1" />
<circle cx="107.4" cy="32.8" r="1.1" fill="#9a9a9a" stroke="none" stroke-width="1" />
<circle cx="96.4" cy="38.4" r="0.9" fill="#7f8fc4" stroke="none" stroke-width="1" />
<rect x="116" y="35.2" width="7.4" height="4.4" fill="#cfd2dc" stroke="#5a6aa0" stroke-width="0.5" rx="0" />
<circle cx="123.2" cy="35" r="0.8" fill="#5a72c0" stroke="none" stroke-width="1" />
<ellipse cx="119.4" cy="52.2" rx="4.1" ry="2.4" fill="none" stroke="#e4e4e4" stroke-width="1.2"/>
<circle cx="119.4" cy="51.6" r="1" fill="#7f8fd0" stroke="none" stroke-width="1" />
<line x1="119.4" y1="48.8" x2="119.4" y2="51" stroke="#ddd" stroke-width="0.7" />
<rect x="115.8" y="62.6" width="7.6" height="7.6" fill="#8f9ed8" stroke="#c9d0ee" stroke-width="0.8" rx="0" />
<path d="M118.3 62.6 v7.6 M120.9 62.6 v7.6 M115.8 65.1 h7.6 M115.8 67.7 h7.6" fill="none" stroke="#b9c3ea" stroke-width="0.5" />
<path d="M147.5 32.8 v9 M143.0 37.3 h9" fill="none" stroke="#e4e4e4" stroke-width="0.9" stroke-dasharray="1.2 0.8"/>
<path d="M147.5 32.099999999999994 l-1.8 2.2 h3.6 Z" fill="#ececec" stroke="none" stroke-width="1" />
<path d="M147.5 42.5 l-1.8 -2.2 h3.6 Z" fill="#ececec" stroke="none" stroke-width="1" />
<path d="M142.3 37.3 l2.2 -1.8 v3.6 Z" fill="#ececec" stroke="none" stroke-width="1" />
<path d="M152.7 37.3 l-2.2 -1.8 v3.6 Z" fill="#ececec" stroke="none" stroke-width="1" />
<circle cx="144.6" cy="48.8" r="2" fill="#ececec" stroke="none" stroke-width="1" />
<circle cx="147.2" cy="51" r="1.9" fill="#cfd6e8" stroke="none" stroke-width="1" />
<circle cx="149.8" cy="53.6" r="2.9" fill="#9fb4dc" stroke="#d8e0f2" stroke-width="0.6" />
<path d="M143.6 63.4 h5 l2.4 2.4 v4.6 h-7.4 Z" fill="#ececec" stroke="none" stroke-width="1" />
<path d="M145 69 l2 -3.6 l2 3.6 Z" fill="#3c3c3c" stroke="none" stroke-width="1" />
<circle cx="191.3" cy="37.5" r="4" fill="none" stroke="#d2d2d2" stroke-width="1.2" />
<path d="M190.4 32 l2.6 1.4 l-2.4 1.6 Z" fill="#8ea6dc" stroke="none" stroke-width="1" />
<path d="M190.6 48 v7.8 h-3.6 Z" fill="#bdbdbd" stroke="none" stroke-width="1" />
<path d="M192 48 v7.8 h3.8 Z" fill="#f0f0f0" stroke="none" stroke-width="1" />
<rect x="187.6" y="62.8" width="8" height="7.6" fill="#ececec" stroke="none" stroke-width="1" rx="0" />
<rect x="188.6" y="66" width="4" height="4.4" fill="#5a5a5a" stroke="#ddd" stroke-width="0.4" rx="0" />
<line x1="228.4" y1="37.8" x2="238.4" y2="37.2" stroke="#7f93c8" stroke-width="0.8" />
<line x1="234.6" y1="32.6" x2="231.8" y2="42" stroke="#7f93c8" stroke-width="0.8" />
<path d="M231.2 56 v-4.6 q0 -3 3.2 -3 h4 v7.6 Z" fill="#ececec" stroke="none" stroke-width="1" />
<path d="M230 53.4 q0 -4.6 4.6 -5" fill="none" stroke="#2a2a2a" stroke-width="0.9" />
<rect x="229.4" y="62" width="4.2" height="4.2" fill="#b9cdf0" stroke="none" stroke-width="1" rx="0" />
<rect x="229.4" y="67.2" width="4.2" height="4.2" fill="#b9cdf0" stroke="none" stroke-width="1" rx="0" />
<rect x="234.8" y="62" width="4.2" height="4.2" fill="#b9cdf0" stroke="none" stroke-width="1" rx="0" />
<rect x="234.8" y="67.2" width="4.2" height="4.2" fill="#b9cdf0" stroke="none" stroke-width="1" rx="0" />
<path d="M277 41 l7.4 -7.2 l1.6 1.6 l-7.4 7.2 Z" fill="#e7a33a" stroke="none" stroke-width="1" />
<path d="M277 41 l-1 2.4 l2.6 -0.8 Z" fill="#f0d8b0" stroke="none" stroke-width="1" />
<line x1="276" y1="42.6" x2="286" y2="42.6" stroke="#c84040" stroke-width="0.8" />
<path d="M276.6 52 l3.4 -2.8 l4 1.2 l-0.4 4.4 l-3.8 1.8 l-3.2 -1.4 Z" fill="#a9c0ec" stroke="none" stroke-width="1" />
<path d="M277.4 50.6 l2.6 2 l3.6 -1.4" fill="none" stroke="#f0f0f0" stroke-width="0.9" />
<line x1="280" y1="52.6" x2="280" y2="56" stroke="#5a78c0" stroke-width="0.7" />
<path d="M277.6 68.6 v-3.6 q0 -1.8 2.6 -1.8 q2.6 0 2.6 1.8 v3.6" fill="none" stroke="#e8e8e8" stroke-width="0.9" />
<rect x="276" y="68.8" width="8.4" height="1.8" fill="#9ab0e0" stroke="none" stroke-width="1" rx="0" />
<text x="306.6" y="49.9" font-family="Liberation Sans,sans-serif" font-size="24" text-anchor="middle" fill="#f2f2f2">A</text>
<line x1="330.4" y1="32.2" x2="330.4" y2="49" stroke="#d0d0d0" stroke-width="0.9" />
<line x1="346.6" y1="32.2" x2="346.6" y2="49" stroke="#d0d0d0" stroke-width="0.9" />
<line x1="330.4" y1="35.4" x2="346.6" y2="35.4" stroke="#7f9fe0" stroke-width="0.9" />
<circle cx="334.6" cy="45.6" r="0.7" fill="#e0b43a" stroke="none" stroke-width="1" />
<circle cx="336.6" cy="43.8" r="0.7" fill="#e0b43a" stroke="none" stroke-width="1" />
<circle cx="339.8" cy="43.8" r="0.7" fill="#e0b43a" stroke="none" stroke-width="1" />
<circle cx="342" cy="45.6" r="0.7" fill="#e0b43a" stroke="none" stroke-width="1" />
<circle cx="338.2" cy="45.6" r="0.7" fill="#e0b43a" stroke="none" stroke-width="1" />
<line x1="361.2" y1="33.4" x2="361.2" y2="40.2" stroke="#d0d0d0" stroke-width="0.8" />
<line x1="371.2" y1="33.4" x2="371.2" y2="40.2" stroke="#d0d0d0" stroke-width="0.8" />
<rect x="361.2" y="35" width="10" height="3.4" fill="#5f7fd0" stroke="none" stroke-width="1" rx="0" />
<line x1="362.6" y1="36.7" x2="369.8" y2="36.7" stroke="#dfe6f8" stroke-width="0.6" />
<path d="M362.4 55.4 l3 -5 h1.6" fill="none" stroke="#e4e4e4" stroke-width="0.9" />
<circle cx="369.4" cy="49.8" r="1" fill="#e4e4e4" stroke="none" stroke-width="1" />
<path d="M361.6 56.4 l0.4 -2 l1.4 1 Z" fill="#e4e4e4" stroke="none" stroke-width="1" />
<rect x="362" y="62.8" width="8.8" height="7.8" fill="#f2f2f2" stroke="none" stroke-width="1" rx="0" />
<path d="M362 65.4 h8.8 M362 68 h8.8 M364.9 65.4 v5.2 M367.8 65.4 v5.2" fill="none" stroke="#8a8a8a" stroke-width="0.5" />
<path d="M418.8 40.6 l7 -2.6 l5.6 2.2 l-7 2.6 Z" fill="#f6f6f6" stroke="#8a8a8a" stroke-width="0.4" />
<path d="M418.8 37.8 l7 -2.6 l5.6 2.2 l-7 2.6 Z" fill="#f6f6f6" stroke="#8a8a8a" stroke-width="0.4" />
<path d="M418.8 35 l7 -2.6 l5.6 2.2 l-7 2.6 Z" fill="#f6f6f6" stroke="#8a8a8a" stroke-width="0.4" />
<rect x="428.6" y="39.6" width="7.8" height="10.2" fill="#f4f4f4" stroke="#50689a" stroke-width="0.6" rx="0.6" />
<rect x="430" y="41.2" width="5" height="3" fill="#8ea6dc" stroke="none" stroke-width="1" rx="0" />
<path d="M430 46 h5 M430 47.8 h5" fill="none" stroke="#8a8a8a" stroke-width="0.5" />
<circle cx="453.2" cy="36" r="2" fill="#f2e07c" stroke="none" stroke-width="1" />
<rect x="452.3" y="37.6" width="1.8" height="2.4" fill="#d9c86a" stroke="none" stroke-width="1" rx="0" />
<circle cx="465.6" cy="37.2" r="1.9" fill="#fbf3c0" stroke="none" stroke-width="1" />
<path d="M465.6 33.6 v7.2 M462 37.2 h7.2 M463 34.6 l5.2 5.2 M468.2 34.6 l-5.2 5.2" fill="none" stroke="#f2e49a" stroke-width="0.5" />
<rect x="473.6" y="33.8" width="5" height="5.4" fill="#d8d8d8" stroke="none" stroke-width="1" rx="0" />
<circle cx="478.4" cy="39.4" r="1.7" fill="#f0c040" stroke="none" stroke-width="1" />
<path d="M484.6 40.6 v-3.4 h4.6 v3.4 Z" fill="#e8d070" stroke="none" stroke-width="1" />
<path d="M488 37 v-2 h2.6" fill="none" stroke="#ddd" stroke-width="0.7" />
<rect x="497" y="33.9" width="7.6" height="7.6" fill="#f6f6f6" stroke="none" stroke-width="1" rx="0" />
<path d="M449.8 50.2 l4.4 -1.7 l3.6 1.5 l-4.4 1.7 Z" fill="#ececec" stroke="none" stroke-width="1" />
<path d="M449.8 52.0 l4.4 -1.7 l3.6 1.5 l-4.4 1.7 Z" fill="#d0d0d0" stroke="none" stroke-width="1" />
<path d="M449.8 53.800000000000004 l4.4 -1.7 l3.6 1.5 l-4.4 1.7 Z" fill="#b4b4b4" stroke="none" stroke-width="1" />
<circle cx="456.4" cy="53.800000000000004" r="1.7" fill="#9fb4e4" stroke="none" stroke-width="1" />
<path d="M449.8 65.4 l4.4 -1.7 l3.6 1.5 l-4.4 1.7 Z" fill="#ececec" stroke="none" stroke-width="1" />
<path d="M449.8 67.2 l4.4 -1.7 l3.6 1.5 l-4.4 1.7 Z" fill="#d0d0d0" stroke="none" stroke-width="1" />
<path d="M449.8 69.0 l4.4 -1.7 l3.6 1.5 l-4.4 1.7 Z" fill="#b4b4b4" stroke="none" stroke-width="1" />
<circle cx="456.4" cy="69.0" r="1.7" fill="#f0c040" stroke="none" stroke-width="1" />
<path d="M463.90000000000003 50.2 l4.4 -1.7 l3.6 1.5 l-4.4 1.7 Z" fill="#ececec" stroke="none" stroke-width="1" />
<path d="M463.90000000000003 52.0 l4.4 -1.7 l3.6 1.5 l-4.4 1.7 Z" fill="#d0d0d0" stroke="none" stroke-width="1" />
<path d="M463.90000000000003 53.800000000000004 l4.4 -1.7 l3.6 1.5 l-4.4 1.7 Z" fill="#b4b4b4" stroke="none" stroke-width="1" />
<circle cx="470.5" cy="53.800000000000004" r="1.7" fill="#8a9ab8" stroke="none" stroke-width="1" />
<path d="M463.90000000000003 65.4 l4.4 -1.7 l3.6 1.5 l-4.4 1.7 Z" fill="#ececec" stroke="none" stroke-width="1" />
<path d="M463.90000000000003 67.2 l4.4 -1.7 l3.6 1.5 l-4.4 1.7 Z" fill="#d0d0d0" stroke="none" stroke-width="1" />
<path d="M463.90000000000003 69.0 l4.4 -1.7 l3.6 1.5 l-4.4 1.7 Z" fill="#b4b4b4" stroke="none" stroke-width="1" />
<circle cx="470.5" cy="69.0" r="1.7" fill="#9fb4e4" stroke="none" stroke-width="1" />
<path d="M478.7 50.2 l4.4 -1.7 l3.6 1.5 l-4.4 1.7 Z" fill="#ececec" stroke="none" stroke-width="1" />
<path d="M478.7 52.0 l4.4 -1.7 l3.6 1.5 l-4.4 1.7 Z" fill="#d0d0d0" stroke="none" stroke-width="1" />
<path d="M478.7 53.800000000000004 l4.4 -1.7 l3.6 1.5 l-4.4 1.7 Z" fill="#b4b4b4" stroke="none" stroke-width="1" />
<circle cx="485.29999999999995" cy="53.800000000000004" r="1.7" fill="#9fb4e4" stroke="none" stroke-width="1" />
<path d="M478.7 65.4 l4.4 -1.7 l3.6 1.5 l-4.4 1.7 Z" fill="#ececec" stroke="none" stroke-width="1" />
<path d="M478.7 67.2 l4.4 -1.7 l3.6 1.5 l-4.4 1.7 Z" fill="#d0d0d0" stroke="none" stroke-width="1" />
<path d="M478.7 69.0 l4.4 -1.7 l3.6 1.5 l-4.4 1.7 Z" fill="#b4b4b4" stroke="none" stroke-width="1" />
<circle cx="485.29999999999995" cy="69.0" r="1.7" fill="#f0c040" stroke="none" stroke-width="1" />
<path d="M493.6 50.2 l4.4 -1.7 l3.6 1.5 l-4.4 1.7 Z" fill="#ececec" stroke="none" stroke-width="1" />
<path d="M493.6 52.0 l4.4 -1.7 l3.6 1.5 l-4.4 1.7 Z" fill="#d0d0d0" stroke="none" stroke-width="1" />
<path d="M493.6 53.800000000000004 l4.4 -1.7 l3.6 1.5 l-4.4 1.7 Z" fill="#b4b4b4" stroke="none" stroke-width="1" />
<circle cx="500.2" cy="53.800000000000004" r="1.7" fill="#8a9ab8" stroke="none" stroke-width="1" />
<path d="M493.6 65.4 l4.4 -1.7 l3.6 1.5 l-4.4 1.7 Z" fill="#ececec" stroke="none" stroke-width="1" />
<path d="M493.6 67.2 l4.4 -1.7 l3.6 1.5 l-4.4 1.7 Z" fill="#d0d0d0" stroke="none" stroke-width="1" />
<path d="M493.6 69.0 l4.4 -1.7 l3.6 1.5 l-4.4 1.7 Z" fill="#b4b4b4" stroke="none" stroke-width="1" />
<circle cx="500.2" cy="69.0" r="1.7" fill="#f0c040" stroke="none" stroke-width="1" />
<path d="M508.00000000000006 50.2 l4.4 -1.7 l3.6 1.5 l-4.4 1.7 Z" fill="#ececec" stroke="none" stroke-width="1" />
<path d="M508.00000000000006 52.0 l4.4 -1.7 l3.6 1.5 l-4.4 1.7 Z" fill="#d0d0d0" stroke="none" stroke-width="1" />
<path d="M508.00000000000006 53.800000000000004 l4.4 -1.7 l3.6 1.5 l-4.4 1.7 Z" fill="#b4b4b4" stroke="none" stroke-width="1" />
<circle cx="514.6" cy="53.800000000000004" r="1.7" fill="#8a9ab8" stroke="none" stroke-width="1" />
<path d="M508.00000000000006 65.4 l4.4 -1.7 l3.6 1.5 l-4.4 1.7 Z" fill="#ececec" stroke="none" stroke-width="1" />
<path d="M508.00000000000006 67.2 l4.4 -1.7 l3.6 1.5 l-4.4 1.7 Z" fill="#d0d0d0" stroke="none" stroke-width="1" />
<path d="M508.00000000000006 69.0 l4.4 -1.7 l3.6 1.5 l-4.4 1.7 Z" fill="#b4b4b4" stroke="none" stroke-width="1" />
<circle cx="514.6" cy="69.0" r="1.7" fill="#f0c040" stroke="none" stroke-width="1" />
<path d="M587.6 33.2 h6.6 l3.4 3.4 v9 h-10 Z" fill="#a9c2ea" stroke="#d6e2f6" stroke-width="0.5" />
<rect x="579.4" y="39.2" width="10.4" height="7.4" fill="#f0f0f0" stroke="#b0b0b0" stroke-width="0.4" rx="0" />
<circle cx="591.4" cy="46.2" r="4.1" fill="#f4f4f4" stroke="#b9b9b9" stroke-width="0.5" />
<rect x="604.4" y="35.2" width="4.4" height="3.6" fill="#e8e8e8" stroke="none" stroke-width="1" rx="0" />
<rect x="607" y="37.4" width="4.6" height="3.6" fill="#f4f4f4" stroke="#8a8a8a" stroke-width="0.3" rx="0" />
<circle cx="606" cy="39.6" r="1.4" fill="#b9c8ea" stroke="none" stroke-width="1" />
<rect x="604.4" y="50" width="4.4" height="3.6" fill="#e8e8e8" stroke="none" stroke-width="1" rx="0" />
<rect x="607" y="52" width="4.4" height="3.4" fill="#f4f4f4" stroke="#8a8a8a" stroke-width="0.3" rx="0" />
<circle cx="610.8" cy="49.4" r="1.3" fill="#f0c84a" stroke="none" stroke-width="1" />
<path d="M607.6 65 l2 1.8 l2 -1.8 l-0.6 3.4 l-1.4 1.4 l-1.4 -1.4 Z" fill="#e9a060" stroke="none" stroke-width="1" />
<circle cx="609.6" cy="67.4" r="0.9" fill="#f4f4f4" stroke="none" stroke-width="1" />
<rect x="685.6" y="32.6" width="11.6" height="16.4" fill="#f4f4f4" stroke="#b8c4dc" stroke-width="0.5" rx="0.5" />
<rect x="686.8" y="34" width="9.2" height="7.4" fill="#4766b8" stroke="none" stroke-width="1" rx="0" />
<path d="M687 43.6 h4 M687 45.6 h6" fill="none" stroke="#8a8a8a" stroke-width="0.6" />
<path d="M693 45.6 l5.2 -2.2 l3.4 2.6 l-3 3.6 l-3.4 0.4 Z" fill="#b0722a" stroke="none" stroke-width="1" />
<line x1="698.4" y1="44.4" x2="701.6" y2="41.6" stroke="#e8c070" stroke-width="1.1" />
<path d="M718.7 36.8 L718.70 32.40 A4.4 4.4 0 0 1 722.51 34.60 Z" fill="#e04040" stroke="none" stroke-width="1" />
<path d="M718.7 36.8 L722.51 34.60 A4.4 4.4 0 0 1 722.51 39.00 Z" fill="#e8c040" stroke="none" stroke-width="1" />
<path d="M718.7 36.8 L722.51 39.00 A4.4 4.4 0 0 1 718.70 41.20 Z" fill="#50b850" stroke="none" stroke-width="1" />
<path d="M718.7 36.8 L718.70 41.20 A4.4 4.4 0 0 1 714.89 39.00 Z" fill="#40a0d8" stroke="none" stroke-width="1" />
<path d="M718.7 36.8 L714.89 39.00 A4.4 4.4 0 0 1 714.89 34.60 Z" fill="#7050c0" stroke="none" stroke-width="1" />
<path d="M718.7 36.8 L714.89 34.60 A4.4 4.4 0 0 1 718.70 32.40 Z" fill="#d050a0" stroke="none" stroke-width="1" />
<rect x="714.4" y="47" width="9" height="1.8" fill="#e4e4e4" stroke="none" stroke-width="1" rx="0" />
<rect x="714.4" y="50.2" width="9" height="2.4" fill="#e4e4e4" stroke="none" stroke-width="1" rx="0" />
<rect x="714.4" y="53.8" width="9" height="1.4" fill="#e4e4e4" stroke="none" stroke-width="1" rx="0" />
<path d="M714.6 63.8 h8.8 M714.6 66.4 h8.8 M714.6 69 h8.8" fill="none" stroke="#9a9a9a" stroke-width="0.9" stroke-dasharray="1.4 1"/>
<path d="M831 80.4 h3 v-3" fill="none" stroke="#bdbdbd" stroke-width="0.7" />
<rect x="841.4" y="32.8" width="10.6" height="17.6" fill="none" stroke="#bdbdbd" stroke-width="0.6" rx="0" stroke-dasharray="1.2 0.9"/>
<rect x="843" y="34.8" width="6.6" height="5.2" fill="#d3dc98" stroke="none" stroke-width="1" rx="0" />
<circle cx="846.4" cy="46.2" r="3" fill="#f2f2f2" stroke="none" stroke-width="1" />
<path d="M853.8 31.8 l1 4.6 l4.4 -2.8 l-2.8 4.4 l4.6 1 l-4.6 1 l2.8 4.4 l-4.4 -2.8 l-1 4.6 l-1 -4.6 l-4.4 2.8 l2.8 -4.4 l-4.6 -1 l4.6 -1 l-2.8 -4.4 l4.4 2.8 Z" fill="#bfe4f6" stroke="none" stroke-width="1" />
<circle cx="853.8" cy="39" r="1.6" fill="#ffffff" stroke="none" stroke-width="1" />
<rect x="868" y="34.6" width="3.6" height="2.6" fill="#e0e0e0" stroke="none" stroke-width="1" rx="0" />
<circle cx="869.6" cy="39.4" r="1.2" fill="#e8e8e8" stroke="none" stroke-width="1" />
<path d="M872 36.4 l1.4 1.4 l2.8 -3" fill="none" stroke="#e8c84a" stroke-width="0.9" />
<rect x="867.6" y="47.6" width="5" height="6.4" fill="none" stroke="#c4c4c4" stroke-width="0.6" rx="0" stroke-dasharray="1 0.7"/>
<circle cx="870" cy="49.8" r="1.1" fill="#e4e4e4" stroke="none" stroke-width="1" />
<circle cx="870" cy="52.4" r="1.1" fill="#9ab0e0" stroke="none" stroke-width="1" />
<path d="M874 49 v4" fill="none" stroke="#d0d0d0" stroke-width="0.6" />
<rect x="867.6" y="63.6" width="2.2" height="2.2" fill="#dfe8f8" stroke="none" stroke-width="1" rx="0" />
<rect x="871.4" y="65.4" width="2.6" height="2.6" fill="#dfe8f8" stroke="none" stroke-width="1" rx="0" />
<rect x="868" y="68.2" width="2" height="2" fill="#c8d4f0" stroke="none" stroke-width="1" rx="0" />
<path d="M869.6 65.6 l2 1 M870 68.6 l1.6 -1" fill="none" stroke="#dfe8f8" stroke-width="0.5" />
<line x1="892.6" y1="38.4" x2="911" y2="38.4" stroke="#e8e8e8" stroke-width="0.9" />
<line x1="892.6" y1="35.4" x2="892.6" y2="41.6" stroke="#e8e8e8" stroke-width="0.9" />
<line x1="911" y1="35.4" x2="911" y2="41.6" stroke="#e8e8e8" stroke-width="0.9" />
<rect x="892.4" y="43.6" width="18.8" height="3.2" fill="#e3b134" stroke="none" stroke-width="1" rx="0.4" />
<line x1="892.4" y1="44.2" x2="911.2" y2="44.2" stroke="#f4d26a" stroke-width="0.6" />
<path d="M928.2 33 v6 M925.4 35.6 h5.6" fill="none" stroke="#e4e4e4" stroke-width="0.7" />
<rect x="929.2" y="36.8" width="3" height="3.6" fill="#e8e8e8" stroke="none" stroke-width="1" rx="0" />
<circle cx="931.4" cy="33.6" r="1" fill="#e9a040" stroke="none" stroke-width="1" />
<path d="M930 45.6 l0.8 4.4 l4 0.8 l-4 0.8 l-0.8 4.4 l-0.8 -4.4 l-4 -0.8 l4 -0.8 Z" fill="#d4d4d4" stroke="none" stroke-width="1" />
<rect x="927.6" y="62.8" width="4.8" height="6.8" fill="#e4e4e4" stroke="none" stroke-width="1" rx="0.5" />
<rect x="928.4" y="63.8" width="3.2" height="1.6" fill="#555" stroke="none" stroke-width="1" rx="0" />
<path d="M928.4 66.8 h3.2 M928.4 68.2 h3.2" fill="none" stroke="#777" stroke-width="0.5" />
<rect x="948.8" y="34.4" width="10.6" height="13.4" fill="#b9b9b9" stroke="#dcdcdc" stroke-width="0.5" rx="0.8" />
<rect x="951.8" y="33" width="4.6" height="2.4" fill="#dcdcdc" stroke="none" stroke-width="1" rx="0.6" />
<path d="M953.8 38.4 h6.6 l3 3 v8.6 h-9.6 Z" fill="#f6f6f6" stroke="#a8a8a8" stroke-width="0.4" />
<path d="M960.4 38.4 v3 h3" fill="#cfcfcf" stroke="none" stroke-width="1" />
<path d="M975.6 33 l6 5.4 M982.6 33 l-6 5.4" fill="none" stroke="#e4e4e4" stroke-width="0.9" />
<circle cx="976.6" cy="39" r="0.9" fill="#2a2a2a" stroke="#ccc" stroke-width="0.3" />
<circle cx="981.6" cy="39" r="0.9" fill="#2a2a2a" stroke="#ccc" stroke-width="0.3" />
<rect x="975.8" y="48.4" width="4.6" height="5.8" fill="#cfcfcf" stroke="none" stroke-width="1" rx="0" />
<rect x="977.6" y="50" width="4.8" height="5.8" fill="#f4f4f4" stroke="#aaa" stroke-width="0.3" rx="0" />
<path d="M999.8 35.8 h6.6 v3.4 h8.4 v7.4 h-15 Z" fill="#f2f2f2" stroke="#c4c4c4" stroke-width="0.4" />
<path d="M1019.6 80.4 h3 v-3" fill="none" stroke="#bdbdbd" stroke-width="0.7" />
<line x1="688" y1="620" x2="688" y2="638" stroke="#555" stroke-width="0.8" />
<line x1="781.6" y1="621" x2="781.6" y2="637" stroke="#555" stroke-width="0.8" />
<line x1="808.6" y1="621" x2="808.6" y2="637" stroke="#555" stroke-width="0.8" />
<rect x="811.4" y="622.6" width="13" height="12.4" fill="#1f57b4" stroke="none" stroke-width="1" rx="0" />
<path d="M814 626 h3 v3.4 h5.4" fill="none" stroke="#6fa4f4" stroke-width="1.3" />
<rect x="817.6" y="629.4" width="5" height="2.6" fill="#4f8ff0" stroke="none" stroke-width="1" rx="0" />
<path d="M829.6 624.4 v8.2 h6.4 M829.6 629.6 h3 v3" fill="none" stroke="#a8a8a8" stroke-width="0.9" />
<path d="M843.4 624 l7.6 9.6 M851.4 624.6 l-6.4 8.6 M847.6 623.6 v10" fill="none" stroke="#8a8a8a" stroke-width="0.8" />
<path d="M856.4 627.6 h4.4 l-2.2 2.8 Z" fill="#e8e8e8" stroke="none" stroke-width="1" />
<path d="M865.6 632.8 h10.4 M866.4 631 l6.8 -5.6" fill="none" stroke="#3f7fe8" stroke-width="1.1" />
<path d="M868.6 629 q2.4 0.6 2.6 3" fill="none" stroke="#3f7fe8" stroke-width="0.8" />
<rect x="882" y="625.4" width="8.6" height="7.6" fill="none" stroke="#3f7fe8" stroke-width="1.1" rx="0" />
<rect x="884.4" y="623.4" width="4.6" height="2.6" fill="#3ea56a" stroke="none" stroke-width="1" rx="0" />
<path d="M895.6 627.6 h4.4 l-2.2 2.8 Z" fill="#e8e8e8" stroke="none" stroke-width="1" />
<path d="M904.6 624.8 h10 M904.6 627.6 h10 M904.6 630.6 h7.4 M904.6 633 h10" fill="none" stroke="#e4e4e4" stroke-width="1.2" />
<rect x="921.8" y="624.4" width="6.8" height="6.8" fill="none" stroke="#c4c4c4" stroke-width="0.8" rx="0" />
<rect x="924" y="626.6" width="7" height="6.8" fill="#3b3b3b" stroke="#e4e4e4" stroke-width="0.9" rx="0" />
<rect x="925.4" y="628" width="4.2" height="4" fill="#777" stroke="none" stroke-width="1" rx="0" />
<path d="M939.2 633.4 l3.4 -6.4 l3.4 6.4 M940.4 630.6 h4.4" fill="none" stroke="#e4e4e4" stroke-width="1" />
<path d="M942.6 626 l3.4 -2.4 l0.8 1.6" fill="none" stroke="#e4e4e4" stroke-width="0.8" />
<path d="M953.6 633.4 l3.4 -6.4 l3.4 6.4 M954.8 630.6 h4.4" fill="none" stroke="#e4e4e4" stroke-width="1" />
<path d="M957 626 l3.4 -2.4 l0.8 1.6" fill="none" stroke="#e4e4e4" stroke-width="0.8" />
<line x1="965" y1="621" x2="965" y2="637" stroke="#555" stroke-width="0.8" />
<circle cx="972.4" cy="628.8" r="2.7" fill="none" stroke="#e0e0e0" stroke-width="1.8" stroke-dasharray="1.3 0.85"/>
<circle cx="972.4" cy="628.8" r="2.2" fill="none" stroke="#e0e0e0" stroke-width="1.1" />
<line x1="1066" y1="621" x2="1066" y2="637" stroke="#555" stroke-width="0.8" />
<path d="M1069.2 628.8 h8.4 M1073.4 624.6 v8.4" fill="none" stroke="#f0f0f0" stroke-width="1" />
<line x1="1081.8" y1="621" x2="1081.8" y2="637" stroke="#555" stroke-width="0.8" />
<rect x="1086" y="624" width="3.6" height="3.4" fill="none" stroke="#d8d8d8" stroke-width="0.8" rx="0" />
<circle cx="1092.4" cy="628.4" r="1.6" fill="none" stroke="#d8d8d8" stroke-width="0.8" />
<path d="M1086.4 633.8 l2 -3.6 l2 3.6 Z" fill="none" stroke="#d8d8d8" stroke-width="0.8" />
<rect x="1100.4" y="620.4" width="13.6" height="17.6" fill="#1a5fc8" stroke="none" stroke-width="1" rx="0" />
<circle cx="1107.4" cy="628.8" r="3.8" fill="#2a6fd8" stroke="#0d3f92" stroke-width="0.9" />
<path d="M1105.4 628.8 l1.6 1.8 l2.6 -3.4" fill="none" stroke="#0d3f92" stroke-width="0.9" />
<rect x="1119.8" y="623.6" width="10.6" height="8.6" fill="#f4f4f4" stroke="#c8c8c8" stroke-width="0.4" rx="0" />
<path d="M1121 631 l3 -4.6 l2.4 3 l1.4 -1.4 l2 3" fill="none" stroke="#8a8a8a" stroke-width="0.6" />
<path d="M1127.4 631.4 l3.4 3 " fill="none" stroke="#e06a2a" stroke-width="1.4" />
<rect x="1135.4" y="624.4" width="5" height="4" fill="#e8e8e8" stroke="none" stroke-width="1" rx="0" />
<rect x="1137.4" y="628.6" width="6.4" height="4.6" fill="#59b04a" stroke="none" stroke-width="1" rx="0" />
<circle cx="1136.6" cy="631.4" r="1.6" fill="#d8e8a0" stroke="none" stroke-width="1" />
<line x1="1147" y1="621" x2="1147" y2="637" stroke="#555" stroke-width="0.8" />
<rect x="1150.4" y="624.6" width="10" height="8.2" fill="none" stroke="#e4e4e4" stroke-width="0.9" rx="0" />
<path d="M1155.6 626.6 h3 v3 M1158.4 626.8 l-3 3 M1155 631 h-2.6 v-2.4" fill="none" stroke="#e4e4e4" stroke-width="0.8" />
<path d="M1166.2 625.6 h8.6 M1166.2 628.8 h8.6 M1166.2 632 h8.6" fill="none" stroke="#e8e8e8" stroke-width="1.2" />
<path d="M2.6 572.6 h8" fill="none" stroke="#9a9a9a" stroke-width="0.7" stroke-dasharray="0.8 0.7"/>
<path d="M2.6 574 h8" fill="none" stroke="#9a9a9a" stroke-width="0.7" stroke-dasharray="0.8 0.7"/>
<path d="M2.6 575.4 h8" fill="none" stroke="#9a9a9a" stroke-width="0.7" stroke-dasharray="0.8 0.7"/>
<path d="M3.8 580.6 l5.2 5.2 M9 580.6 l-5.2 5.2" fill="none" stroke="#f0f0f0" stroke-width="1.3" />
<path d="M3.6 602 l4 -4" fill="none" stroke="#f0f0f0" stroke-width="1.7" stroke-linecap="round"/>
<circle cx="8.2" cy="596.8" r="2.3" fill="#f0f0f0" stroke="none" stroke-width="1" />
<path d="M8.2 596.8 l1 -3.4 l2.4 2.4 Z" fill="#555" stroke="none" stroke-width="1" />
<rect x="17.6" y="609" width="8.4" height="8" fill="#e4e4e4" stroke="#8a8a8a" stroke-width="0.5" rx="0" />
<path d="M19.4 611 l2.4 2 l-2.4 2 M22.4 615.4 h2.4" fill="none" stroke="#333" stroke-width="0.7" />
<path d="M28.4 612.2 h3.4 l-1.7 2 Z" fill="#777" stroke="none" stroke-width="1" />
<rect x="0" y="154.8" width="13.2" height="401.8" fill="#7b7b7b" stroke="none" stroke-width="1" rx="1.5" />
<path d="M4.4 160.6 l4 4 M8.4 160.6 l-4 4" fill="none" stroke="#a6a6a6" stroke-width="0.8" />
<path d="M4.6 171.6 v4.8 M4.6 172.2 l4 1.8 l-4 1.8" fill="none" stroke="#a6a6a6" stroke-width="0.8" />
<rect x="4" y="182.6" width="4.6" height="4.6" fill="none" stroke="#a6a6a6" stroke-width="0.8" rx="0" />
<text transform="translate(9.4,540) rotate(-90)" font-family="Liberation Sans,sans-serif" font-size="5.4" fill="#9c9c9c" letter-spacing="0.2">PROPERTIES</text>
<path d="M4 545.4 h5.6 M4 547.4 h5.6 M4 549.4 h5.6 M4 551.4 h5.6" fill="none" stroke="#a4a4a4" stroke-width="0.7" />
<rect x="1143.5" y="169.6" width="13.4" height="389" fill="#7b7b7b" stroke="none" stroke-width="1" rx="1.5" />
<path d="M1148.2 175.2 l4 4 M1152.2 175.2 l-4 4" fill="none" stroke="#a6a6a6" stroke-width="0.8" />
<path d="M1148.4 186.2 v4.8 M1148.4 186.8 l4 1.8 l-4 1.8" fill="none" stroke="#a6a6a6" stroke-width="0.8" />
<rect x="1147.8" y="197.6" width="4.6" height="4.6" fill="none" stroke="#a6a6a6" stroke-width="0.8" rx="0" />
<text transform="translate(1152.6,542) rotate(-90)" font-family="Liberation Sans,sans-serif" font-size="5.4" fill="#9c9c9c" letter-spacing="0.25">LAYER PROPERTIES MANAGER</text>
<path d="M1147.6 548.6 l3 -1.2 l2.6 1 l-3 1.2 Z M1147.6 550.6 l3 -1.2 l2.6 1 l-3 1.2 Z M1147.6 552.6 l3 -1.2 l2.6 1 l-3 1.2 Z" fill="none" stroke="#a4a4a4" stroke-width="0.5" />
<rect x="1173.4" y="104.5" width="5.6" height="465" fill="#8db6e2" stroke="none" stroke-width="1" rx="0" />
<rect x="1174.4" y="104.5" width="1.6" height="465" fill="#b9d6f2" stroke="none" stroke-width="1" rx="0" />
<rect x="1172.8" y="104.5" width="0.8" height="465" fill="#6a6a6a" stroke="none" stroke-width="1" rx="0" />
<rect x="1136.6" y="115" width="5.2" height="2.2" fill="#e4e4e4" stroke="#6a6a6a" stroke-width="0.4" rx="0" />
<rect x="1148.6" y="114.4" width="4" height="4" fill="none" stroke="#e8e8e8" stroke-width="0.9" rx="0" />
<path d="M1150 114.2 v-1.4 h4 v4 h-1.2" fill="none" stroke="#e8e8e8" stroke-width="0.8" />
<path d="M1161.4 112.2 l4.4 4.8 M1165.8 112.2 l-4.4 4.8" fill="none" stroke="#ececec" stroke-width="1.1" />
<path d="M9.9 506.8 V559.4 H40 Z" fill="none" stroke="#3a56c0" stroke-width="1" />
<rect x="9.9" y="554.8" width="4.6" height="4.6" fill="none" stroke="#3a56c0" stroke-width="0.8" rx="0" />
<path d="M10.6 516.4 l2.2 8 l2 -5 l2.4 5.2" fill="none" stroke="#3a56c0" stroke-width="0.8" />
<path d="M27 551.4 l5.6 5.8 M32.4 551.6 l-5.4 5.4" fill="none" stroke="#3a56c0" stroke-width="0.8" /></svg>
</body></html>
